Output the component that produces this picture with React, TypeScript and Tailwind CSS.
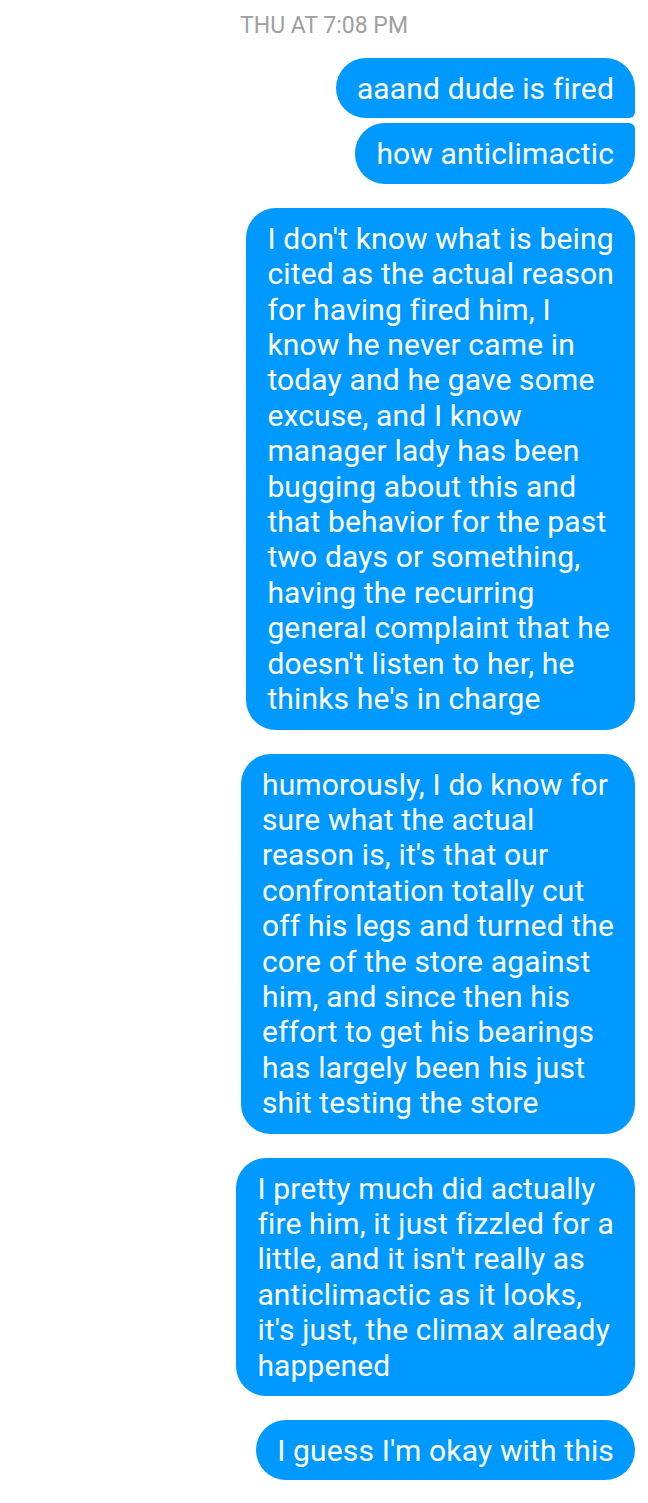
const groups: { lines: string[]; corners: string }[][] = [
  [
    { lines: ['aaand dude is fired'], corners: 'rounded-[30px] rounded-br-[6px]' },
    { lines: ['how anticlimactic'], corners: 'rounded-[30px] rounded-tr-[6px]' },
  ],
  [
    {
      lines: [
        "I don't know what is being",
        'cited as the actual reason',
        'for having fired him, I',
        'know he never came in',
        'today and he gave some',
        'excuse, and I know',
        'manager lady has been',
        'bugging about this and',
        'that behavior for the past',
        'two days or something,',
        'having the recurring',
        'general complaint that he',
        "doesn't listen to her, he",
        "thinks he's in charge",
      ],
      corners: 'rounded-[30px]',
    },
  ],
  [
    {
      lines: [
        'humorously, I do know for',
        'sure what the actual',
        "reason is, it's that our",
        'confrontation totally cut',
        'off his legs and turned the',
        'core of the store against',
        'him, and since then his',
        'effort to get his bearings',
        'has largely been his just',
        'shit testing the store',
      ],
      corners: 'rounded-[30px]',
    },
  ],
  [
    {
      lines: [
        'I pretty much did actually',
        'fire him, it just fizzled for a',
        "little, and it isn't really as",
        'anticlimactic as it looks,',
        "it's just, the climax already",
        'happened',
      ],
      corners: 'rounded-[30px]',
    },
  ],
  [{ lines: ["I guess I'm okay with this"], corners: 'rounded-[30px]' }],
];

const Bubble = ({ lines, corners }: { lines: string[]; corners: string }) => {
  const single = lines.length === 1;
  return (
    <div
      className={`bg-[#0099ff] text-white text-[30px] tracking-[0.15px] leading-[35.4px] whitespace-nowrap px-[21px] ${
        single ? 'py-[12.5px]' : 'py-[13px]'
      } ${corners}`}
    >
      {lines.map((l, i) => (
        <div key={i}>{l}</div>
      ))}
    </div>
  );
};

export default function App() {
  return (
    <div className="w-[648px] h-[1503px] bg-white font-['Roboto',sans-serif] overflow-hidden">
      <div className="pt-[12px] text-center text-[23px] leading-[27px] text-[#a0a0a0]">THU AT 7:08 PM</div>
      <div className="flex flex-col items-end gap-[24px] pr-[13px] pt-[19px]">
        {groups.map((g, gi) => (
          <div key={gi} className="flex flex-col items-end gap-[5px]">
            {g.map((b, bi) => (
              <Bubble key={bi} lines={b.lines} corners={b.corners} />
            ))}
          </div>
        ))}
      </div>
    </div>
  );
}
